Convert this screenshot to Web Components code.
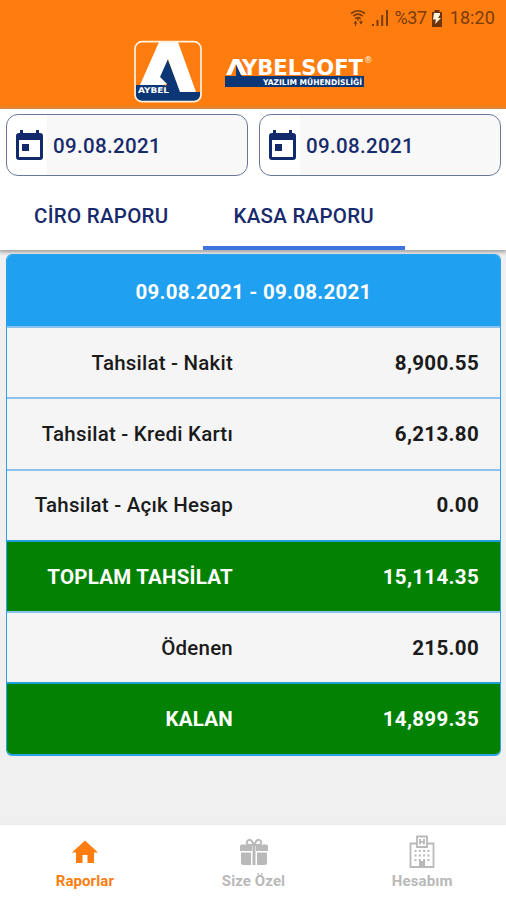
<!DOCTYPE html>
<html lang="tr">
<head>
<meta charset="utf-8">
<title>Kasa Raporu</title>
<style>
  body {
    margin: 0;
    font-family: Roboto, "Noto Sans", sans-serif;
    background: #f0f0f0;
  }
</style>
</head>
<body>
<report-app></report-app>
<script>
(function () {
  function define(name, html) {
    const template = document.createElement('template');
    template.innerHTML = html;
    customElements.define(name, class extends HTMLElement {
      constructor() {
        super();
        this.attachShadow({ mode: 'open' });
        this.shadowRoot.append(template.content.cloneNode(true));
      }
    });
  }

  define('status-bar', `
    <style>
      :host {
        display: flex;
        justify-content: flex-end;
        align-items: center;
        height: 36px;
        padding-right: 11px;
        color: #7a3c08;
        font-size: 18px;
        line-height: 36px;
      }
      svg { display: block; }
      .percent { margin: 0 4px 0 6px; letter-spacing: -.45px; }
      .time { margin-left: 7px; letter-spacing: .1px; }
    </style>
    <svg width="16" height="18" viewBox="0 0 16 18" fill="none" stroke="currentColor" stroke-width="1.6">
      <path d="M1 4.5Q8-1 15 4.5M3.2 7.2Q8 3.2 12.8 7.2M5.3 9.8Q8 7.5 10.7 9.8"/>
      <path d="M8 9.500v2" />
      <path d="M3.500 14.500l2-3 2 3zM9 12.500h4l-2 3z" fill="currentColor" stroke="none"/>
      <path d="M5.500 14v3M11 11.500v3" stroke-width="1.300"/>
    </svg>
    <svg width="18" height="18" viewBox="0 0 18 18" style="margin-left:5px">
      <path fill="currentColor" d="M1 15h2v2H1zM5.500 11h2v6h-2zM10.200 6h2v11h-2zM15 1h2v16h-2z"/>
    </svg>
    <span class="percent">%37</span>
    <svg width="12" height="17" viewBox="0 0 12 17">
      <path fill="#6d3408" d="M3.500 0h5v2H11v15H1V2h2.500z"/>
      <path fill="#fff3dd" d="M3 3h6v2L7 8h3l-6 6 1-4.500H2z"/>
    </svg>
    <span class="time">18:20</span>
  `);

  define('brand-header', `
    <style>
      :host {
        display: block;
        height: 109px;
        background: #ff7d0f;
      }
      .logos {
        display: flex;
        justify-content: center;
        align-items: flex-start;
        gap: 23px;
        padding: 4px 0 0 1px;
      }
      svg { display: block; font-family: "DejaVu Sans", sans-serif; font-weight: bold; }
      .word { margin-top: 14px; }
    </style>
    <status-bar></status-bar>
    <div class="logos">
      <svg width="68" height="63" viewBox="0 0 68 63">
        <path fill="#0c3777" d="M2 45H30L44 52H66V55Q66 61 60 61H8Q2 61 2 55z"/>
        <path fill="#0c3777" d="M33.500 19L47 53H29L33 44 25 36z"/>
        <path fill="#fff" d="M25 2H44L62 52H46L34 19 26 37 33 44 30 45H6z"/>
        <rect x="1" y="1.700" width="66" height="60" rx="7" fill="none" stroke="#fff2df" stroke-width="1.700"/>
        <text x="4" y="52.800" font-size="7.800" textLength="31" lengthAdjust="spacingAndGlyphs" fill="#fff">AYBEL</text>
      </svg>
      <svg class="word" width="149" height="36" viewBox="0 0 149 36">
        <path fill="#0c3777" d="M0 22H11V10L17 22H139V33H0z"/>
        <path fill="#fff" d="M1 21L8 5H14L22 21H16L11 10 6 21z"/>
        <text x="17" y="20.800" font-size="21.500" textLength="121" lengthAdjust="spacingAndGlyphs" fill="#fff">YBELSOFT</text>
        <text x="138.800" y="9" font-size="9" font-weight="normal" fill="#fff2df">®</text>
        <text x="38" y="30.700" font-size="7.800" textLength="99" lengthAdjust="spacingAndGlyphs" fill="#fff">YAZILIM MÜHENDİSLİĞİ</text>
      </svg>
    </div>
  `);

  define('date-field', `
    <style>
      :host {
        display: flex;
        align-items: center;
        box-sizing: border-box;
        flex: 1;
        height: 62px;
        padding-left: 8px;
        border: 1px solid #68789c;
        border-radius: 12px;
        background: linear-gradient(90deg, #fff 40px, #f8f8f8 40px);
        color: #172a6b;
        font-size: 20.500px;
        font-weight: 500;
        letter-spacing: .35px;
      }
      svg { display: block; margin-right: 9px; }
      span { padding-top: 2px; }
    </style>
    <svg width="29" height="31" viewBox="0 0 29 31">
      <path fill="#12296b" fill-rule="evenodd" d="M5 0h3v3h13V0h3v3h1q3 0 3 3v21q0 3-3 3H4q-3 0-3-3V6q0-3 3-3h1zM4 10v17h21V10z"/>
      <path fill="#12296b" d="M7 14h7v7H7z"/>
    </svg>
    <span><slot></slot></span>
  `);

  define('tab-item', `
    <style>
      :host {
        display: flex;
        align-items: center;
        justify-content: center;
        box-sizing: border-box;
        width: 202.500px;
        height: 68px;
        padding-top: 3px;
        border-bottom: 4px solid transparent;
        color: #172a6b;
        font-size: 20.500px;
        font-weight: 500;
        letter-spacing: .27px;
      }
      :host([active]) { border-color: #3d76e0; }
    </style>
    <slot></slot>
  `);

  define('report-row', `
    <style>
      :host {
        display: grid;
        grid-template-columns: 226px 1fr;
        align-items: center;
        box-sizing: border-box;
        height: 71.300px;
        padding-right: 21px;
        border-top: 2px solid #8cc3ee;
        background: #f5f5f5;
        color: #1b1b1b;
        font-size: 20.500px;
        font-weight: 500;
        letter-spacing: .22px;
        text-align: right;
      }
      :host([total]) {
        background: #038103;
        border-color: #1f9fd6;
        color: #fff;
        font-weight: 700;
      }
      .value { font-weight: 700; letter-spacing: .33px; }
    </style>
    <span><slot></slot></span>
    <span class="value"><slot name="value"></slot></span>
  `);

  define('report-card', `
    <style>
      :host {
        display: block;
        box-sizing: border-box;
        margin: 4px 5px 0 6px;
        border: 1px solid #2ba3e8;
        border-bottom-width: 2px;
        border-radius: 6px;
        overflow: hidden;
      }
      header {
        display: flex;
        align-items: center;
        justify-content: center;
        box-sizing: border-box;
        height: 71px;
        padding-top: 2px;
        background: #1fa0f0;
        color: #fff;
        font-size: 20.500px;
        font-weight: 700;
        letter-spacing: .25px;
      }
    </style>
    <header><slot name="title"></slot></header>
    <slot></slot>
  `);

  define('nav-item', `
    <style>
      :host {
        display: flex;
        flex: 1;
        flex-direction: column;
        align-items: center;
        padding-left: 1px;
        color: #b9b9b9;
        font-size: 15px;
        font-weight: 700;
        letter-spacing: .1px;
      }
      :host([active]) { color: #ff7d0f; }
      .icon { height: 36px; margin-top: 10px; }
      .label { line-height: 20px; }
    </style>
    <div class="icon"><slot name="icon"></slot></div>
    <div class="label"><slot></slot></div>
  `);

  define('report-app', `
    <style>
      :host {
        display: flex;
        flex-direction: column;
        height: 900px;
        overflow: hidden;
      }
      .top { background: #fff; box-shadow: 0 1px 4px 1px #999; }
      .dates { display: flex; gap: 11px; padding: 5px 5px 6px 6px; }
      .tabs { display: flex; }
      nav {
        display: flex;
        height: 75px;
        margin-top: auto;
        background: #fff;
        box-shadow: 0 0 2px #ddd;
      }
      svg { display: block; }
      report-card { position: relative; }
    </style>
    <brand-header></brand-header>
    <div class="top">
      <div class="dates">
        <date-field>09.08.2021</date-field>
        <date-field>09.08.2021</date-field>
      </div>
      <div class="tabs">
        <tab-item>CİRO RAPORU</tab-item>
        <tab-item active>KASA RAPORU</tab-item>
      </div>
    </div>
    <report-card>
      <span slot="title">09.08.2021 - 09.08.2021</span>
      <report-row>Tahsilat - Nakit<span slot="value">8,900.55</span></report-row>
      <report-row>Tahsilat - Kredi Kartı<span slot="value">6,213.80</span></report-row>
      <report-row>Tahsilat - Açık Hesap<span slot="value">0.00</span></report-row>
      <report-row total>TOPLAM TAHSİLAT<span slot="value">15,114.35</span></report-row>
      <report-row>Ödenen<span slot="value">215.00</span></report-row>
      <report-row total>KALAN<span slot="value">14,899.35</span></report-row>
    </report-card>
    <nav>
      <nav-item active>
        <svg slot="icon" width="26" height="36" viewBox="0 0 26 36">
          <path fill="currentColor" d="M13 5.500L26 17.500H22V28H15.500V20H10.500V28H4V17.500H0z"/>
        </svg>
        Raporlar
      </nav-item>
      <nav-item>
        <svg slot="icon" width="30" height="36" viewBox="0 0 30 36">
          <path fill="currentColor" d="M3 9.500H13V16H1V11.500Q1 9.500 3 9.500zM17 9.500H27Q29 9.500 29 11.500V16H17zM2 17.500H12V30H4Q2 30 2 28zM18 17.500H28V28Q28 30 26 30H18zM13.500 9.500h3V30h-3z"/>
          <path fill="none" stroke="currentColor" stroke-width="2" d="M14 10H10Q7 9 8 6.500 10 3.500 12.500 6L15 9.500 17.500 6Q20 3.500 22 6.500 23 9 20 10H16"/>
        </svg>
        Size Özel
      </nav-item>
      <nav-item>
        <svg slot="icon" width="26" height="36" viewBox="0 0 26 36" fill="none" stroke="currentColor" stroke-width="1.800">
          <path d="M8 8.500H1.500V32H24.500V8.500H18M8 1.500H18V12H8zM11 4v5.500M15 4v5.500M11 6.800H15"/>
          <path stroke-dasharray="2 2.300" d="M5.500 16H21M5.500 20.500H21M5.500 25H21"/>
          <path fill="currentColor" stroke="none" d="M10 26h6v6h-6z"/>
        </svg>
        Hesabım
      </nav-item>
    </nav>
  `);
})();
</script>
</body>
</html>
